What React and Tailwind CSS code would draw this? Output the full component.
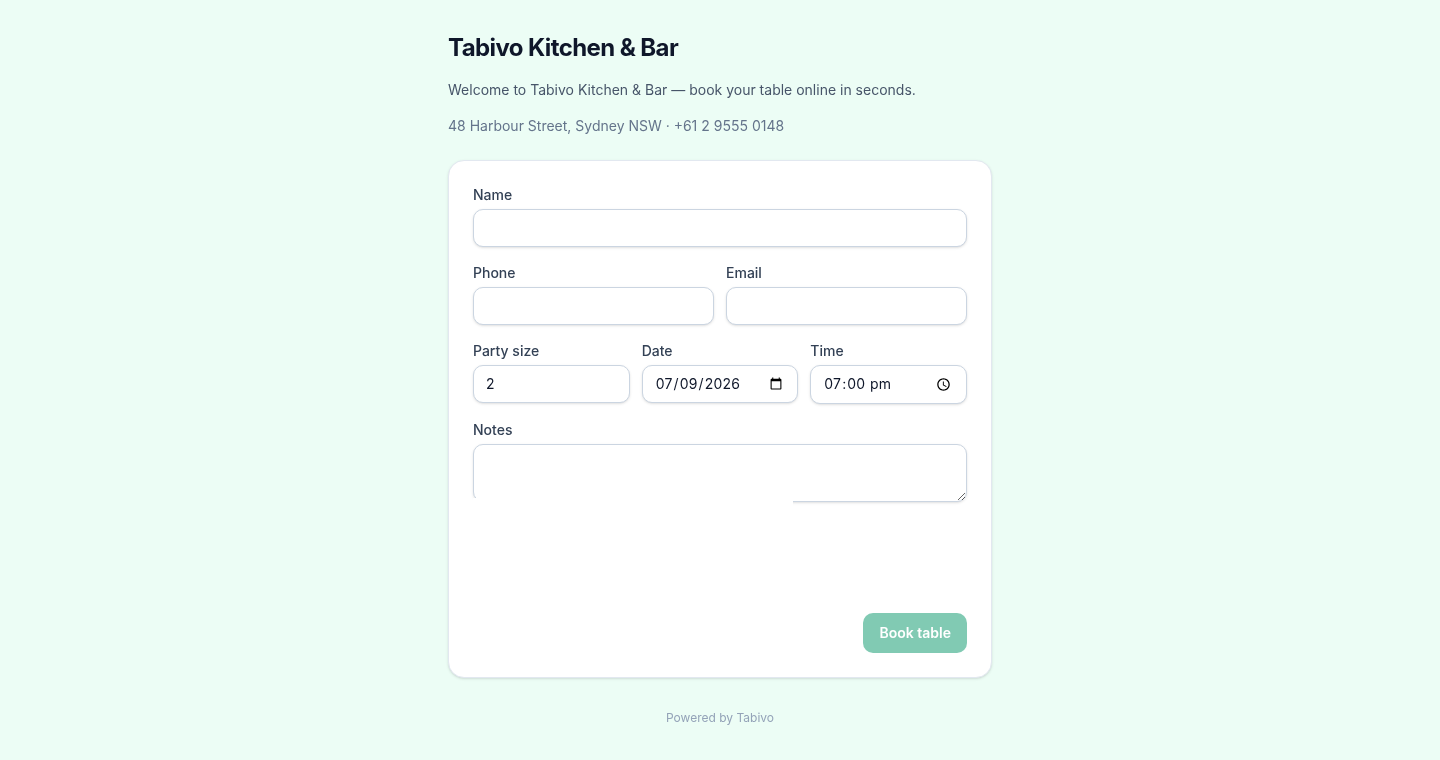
const fieldClass =
  'block w-full rounded-[10px] border border-[#cbd5e1] bg-white px-3 py-2 text-sm tracking-[0.012em] text-[#0f172a] shadow-sm outline-none [&::-webkit-datetime-edit-ampm-field]:lowercase'

function Field({ label, children }) {
  return (
    <label className="block min-w-0">
      <span className="mb-1 block text-sm font-medium text-[#334155]">{label}</span>
      {children}
    </label>
  )
}

export default function App() {
  return (
    <div className="min-h-screen bg-[#ecfdf5] font-['Inter',sans-serif] will-change-transform">
      <div className="mx-auto w-[544px] pt-8 pb-8">
        <h1 className="text-2xl font-bold tracking-tight text-[#0f172a]">Tabivo Kitchen &amp; Bar</h1>
        <p className="mt-3.5 text-sm leading-6 text-[#475569]">
          Welcome to Tabivo Kitchen &amp; Bar — book your table online in seconds.
        </p>
        <p className="mt-3 text-sm leading-6 text-[#64748b]">48 Harbour Street, Sydney NSW · +61 2 9555 0148</p>

        <form className="mt-[22px] rounded-2xl border border-[#e2e8f0] bg-white p-6 shadow-sm">
          <div className="flex flex-col gap-4">
            <Field label="Name">
              <input type="text" className={fieldClass} />
            </Field>

            <div className="grid grid-cols-2 gap-3">
              <Field label="Phone">
                <input type="tel" className={fieldClass} />
              </Field>
              <Field label="Email">
                <input type="email" className={fieldClass} />
              </Field>
            </div>

            <div className="grid grid-cols-3 gap-3">
              <Field label="Party size">
                <input type="number" defaultValue="2" className={fieldClass} />
              </Field>
              <Field label="Date">
                <input type="date" defaultValue="2026-07-09" className={fieldClass} />
              </Field>
              <Field label="Time">
                <input type="time" defaultValue="19:00" className={fieldClass} />
              </Field>
            </div>

            <Field label="Notes">
              <textarea rows="2" className={fieldClass} />
            </Field>
          </div>

          {/* empty booking widget slot, sits over the bottom of the textarea */}
          <div className="relative -mt-1 h-[65px] w-[320px] bg-white" />

          <div className="mt-[50px] flex justify-end">
            <button
              type="button"
              className="h-10 rounded-[10px] bg-[#059669] px-4 text-sm font-semibold text-white opacity-50"
            >
              Book table
            </button>
          </div>
        </form>

        <p className="mt-8 text-center text-xs text-[#94a3b8]">Powered by Tabivo</p>
      </div>
    </div>
  )
}
